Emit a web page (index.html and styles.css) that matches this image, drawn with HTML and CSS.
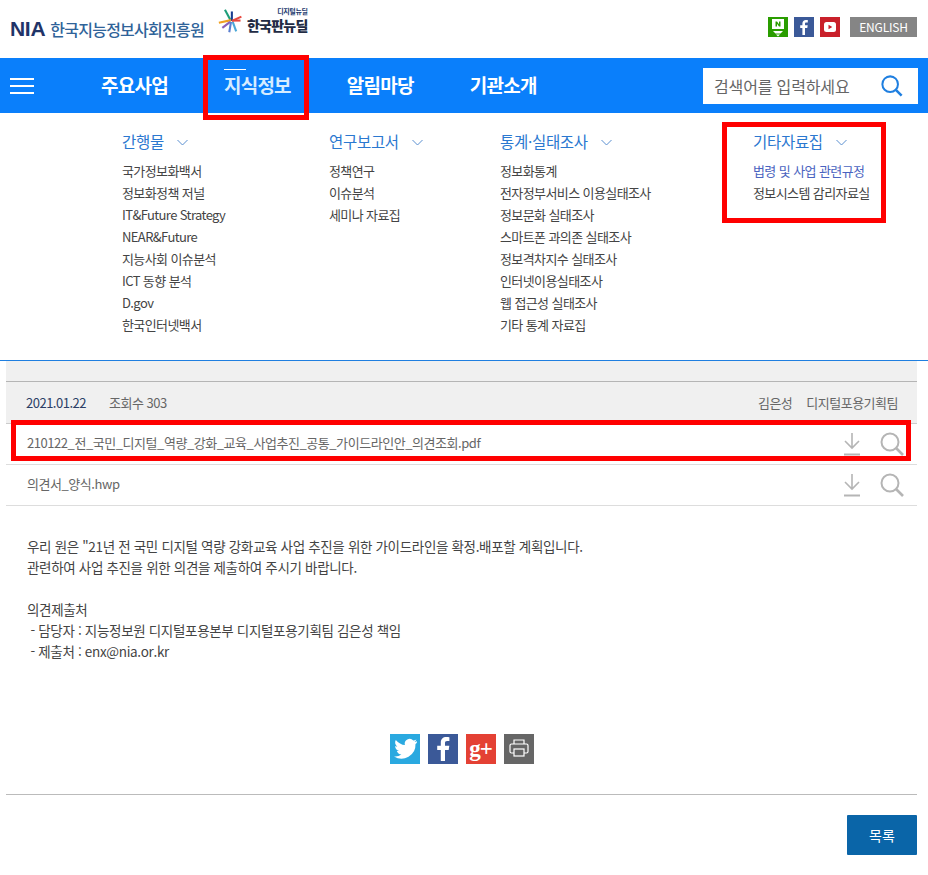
FILE: index.html
```html
<!DOCTYPE html>
<html lang="ko">
<head>
<meta charset="utf-8">
<title>NIA 한국지능정보사회진흥원</title>
<link rel="stylesheet" href="styles.css">
</head>
<body>
<div class="page">
  <header class="top">
    <div class="logos">
      <span class="nia">NIA</span>
      <span class="org">한국지능정보사회진흥원</span>
      <svg class="star" width="26" height="28" viewBox="0 0 30 32" fill="none" stroke-width="2.400">
        <path d="M15 16L8 3" stroke="#1f9e7a"/>
        <path d="M16 16V5" stroke="#1a3d8f"/>
        <path d="M16 16L27 11" stroke="#e8483f"/>
        <path d="M15 15L1 18" stroke="#f0a020"/>
        <path d="M14 17L5 24" stroke="#8a5fb8"/>
        <path d="M15 17L13 29" stroke="#5a7fd0"/>
        <path d="M17 17L21 28" stroke="#4aa8d8"/>
        <path d="M17 15.500H26" stroke="#e8483f"/>
      </svg>
      <span class="deal"><small>디지털뉴딜</small><b>한국판뉴딜</b></span>
    </div>
    <div class="top-right">
      <a class="sns naver"><svg width="20" height="20" viewBox="0 0 20 20"><path d="M4 2h12v10H4z" fill="#fff"/><path d="M7.500 4.500h1.500l2 2.800V4.500h1.500v5H11L9 6.700v2.800H7.500z" fill="#2a9d00"/><path d="M5 14h10l-2.500 2.500h-5zM8 17.500h4L10 19.500z" fill="#fff"/></svg></a>
      <a class="sns fb"><svg width="20" height="20" viewBox="0 0 20 20"><path d="M11 18v-7h2.300l.4-2.700H11V6.700c0-.8.3-1.300 1.400-1.300h1.400V3c-.3 0-1.100-.1-2-.1-2 0-3.400 1.200-3.400 3.500v1.900H6.200V11h2.200v7z" fill="#fff"/></svg></a>
      <a class="sns yt"><svg width="20" height="20" viewBox="0 0 20 20"><rect x="4" y="5" width="12" height="10" rx="2.500" fill="#fff"/><path d="M8.500 7.800v4.400l3.800-2.200z" fill="#c9202a"/></svg></a>
      <a class="eng">ENGLISH</a>
    </div>
  </header>

  <nav class="gnb">
    <span class="burger"><i></i><i></i><i></i></span>
    <ul class="gnb-menu">
      <li>주요사업</li>
      <li class="on">지식정보</li>
      <li>알림마당</li>
      <li>기관소개</li>
    </ul>
    <div class="search">
      <span>검색어를 입력하세요</span>
      <svg width="22" height="22" viewBox="0 0 24 24" fill="none" stroke="#1f7fe0" stroke-width="2.200"><circle cx="10" cy="10" r="8.500"/><path d="M16.500 16.500l6 6" stroke-width="2.800"/></svg>
    </div>
  </nav>

  <section class="mega">
    <div class="col c1">
      <h3>간행물<svg class="chev" width="11" height="7" viewBox="0 0 11 7"><path d="M.5 1l5 5 5-5" fill="none" stroke="#5a8fd0"/></svg></h3>
      <a>국가정보화백서</a><a>정보화정책 저널</a><a>IT&amp;Future Strategy</a><a>NEAR&amp;Future</a><a>지능사회 이슈분석</a><a>ICT 동향 분석</a><a>D.gov</a><a>한국인터넷백서</a>
    </div>
    <div class="col c2">
      <h3>연구보고서<svg class="chev" width="11" height="7" viewBox="0 0 11 7"><path d="M.5 1l5 5 5-5" fill="none" stroke="#5a8fd0"/></svg></h3>
      <a>정책연구</a><a>이슈분석</a><a>세미나 자료집</a>
    </div>
    <div class="col c3">
      <h3>통계·실태조사<svg class="chev" width="11" height="7" viewBox="0 0 11 7"><path d="M.5 1l5 5 5-5" fill="none" stroke="#5a8fd0"/></svg></h3>
      <a>정보화통계</a><a>전자정부서비스 이용실태조사</a><a>정보문화 실태조사</a><a>스마트폰 과의존 실태조사</a><a>정보격차지수 실태조사</a><a>인터넷이용실태조사</a><a>웹 접근성 실태조사</a><a>기타 통계 자료집</a>
    </div>
    <div class="col c4">
      <h3>기타자료집<svg class="chev" width="11" height="7" viewBox="0 0 11 7"><path d="M.5 1l5 5 5-5" fill="none" stroke="#5a8fd0"/></svg></h3>
      <a class="cur">법령 및 사업 관련규정</a><a>정보시스템 감리자료실</a>
    </div>
  </section>

  <main class="board">
    <div class="title-band"></div>
    <div class="meta">
      <div><span class="date">2021.01.22</span><span class="views">조회수 303</span></div>
      <div class="author"><span>김은성</span><span>디지털포용기획팀</span></div>
    </div>
    <div class="file">
      <span class="file-name">210122_전_국민_디지털_역량_강화_교육_사업추진_공통_가이드라인안_의견조회.pdf</span>
      <span class="file-icons">
        <svg width="18" height="24" viewBox="0 0 18 24" fill="none" stroke="#b5b5b5" stroke-width="1.600"><path d="M9 1v15M2 9l7 7 7-7"/><path d="M1 22.500h16" stroke-width="2"/></svg>
        <svg width="24" height="24" viewBox="0 0 24 24" fill="none" stroke="#b5b5b5" stroke-width="2"><circle cx="10" cy="10" r="8.500"/><path d="M16 16l7 7" stroke-width="2.600"/></svg>
      </span>
    </div>
    <div class="file">
      <span class="file-name">의견서_양식.hwp</span>
      <span class="file-icons">
        <svg width="18" height="24" viewBox="0 0 18 24" fill="none" stroke="#b5b5b5" stroke-width="1.600"><path d="M9 1v15M2 9l7 7 7-7"/><path d="M1 22.500h16" stroke-width="2"/></svg>
        <svg width="24" height="24" viewBox="0 0 24 24" fill="none" stroke="#b5b5b5" stroke-width="2"><circle cx="10" cy="10" r="8.500"/><path d="M16 16l7 7" stroke-width="2.600"/></svg>
      </span>
    </div>
    <div class="body">
      <p>우리 원은 "21년 전 국민 디지털 역량 강화교육 사업 추진을 위한 가이드라인을 확정.배포할 계획입니다.</p>
      <p>관련하여 사업 추진을 위한 의견을 제출하여 주시기 바랍니다.</p>
      <p>&nbsp;</p>
      <p>의견제출처</p>
      <p>&nbsp;- 담당자 : 지능정보원 디지털포용본부 디지털포용기획팀 김은성 책임</p>
      <p>&nbsp;- 제출처 : enx@nia.or.kr</p>
    </div>
    <div class="share">
      <a class="s tw"><svg width="30" height="30" viewBox="0 0 30 30"><path d="M27 7.300c-.9.400-1.800.7-2.800.8 1-.6 1.800-1.600 2.200-2.700-1 .6-2 1-3.100 1.200a4.900 4.900 0 0 0-8.400 4.500C11.800 10.900 8.200 9 5.800 6a4.900 4.900 0 0 0 1.500 6.600c-.8 0-1.600-.2-2.200-.6 0 2.400 1.700 4.400 3.900 4.900-.7.200-1.500.2-2.200.1.600 2 2.400 3.400 4.600 3.400A9.900 9.900 0 0 1 4 22.400 14 14 0 0 0 25.500 10c1-.7 1.800-1.600 1.500-2.700z" fill="#fff"/></svg></a>
      <a class="s fb2"><svg width="30" height="30" viewBox="0 0 30 30"><path d="M17 27V16h3.700l.6-4.300H17V9.200c0-1.300.4-2.100 2.200-2.100h2.200V3.300c-.4 0-1.700-.2-3.200-.2-3.200 0-5.400 2-5.400 5.500v3.100H9.200V16h3.600v11z" fill="#fff"/></svg></a>
      <a class="s gp"><span>g+</span></a>
      <a class="s pr"><svg width="30" height="30" viewBox="0 0 30 30" fill="none" stroke="#fff" stroke-width="1.200"><path d="M10 10V6h10v4"/><rect x="6" y="10" width="18" height="9" rx="1.500"/><rect x="10" y="15" width="10" height="7" fill="#666"/></svg></a>
    </div>
    <div class="actions"><a class="list-btn">목록</a></div>
  </main>

  <div class="mark m-nav"></div>
  <div class="mark m-sub"></div>
  <div class="mark m-file"></div>
</div>
</body>
</html>
```

FILE: styles.css
```css
* { box-sizing: border-box; }
html, body { margin: 0; padding: 0; }
body {
  background: #fff;
  color: #444;
  font-family: "Noto Sans CJK KR", "Noto Sans", sans-serif;
  font-size: 13px;
}
a { color: inherit; text-decoration: none; }
.page { position: relative; width: 928px; height: 875px; overflow: hidden; }

.top { height: 58px; display: flex; justify-content: space-between; align-items: center; padding: 0 11px 0 10px; }
.logos { display: flex; align-items: center; }
.nia { font: bold 21px "Liberation Sans", sans-serif; color: #1f3468; letter-spacing: -.3px; }
.org { margin-left: 5px; font-size: 16px; font-weight: 500; color: #2f6399; letter-spacing: -.75px; }
.star { margin-left: 14px; margin-top: -16px; }
.deal { display: flex; flex-direction: column; align-items: flex-end; margin-left: 3px; line-height: 1; margin-top: -18px; }
.deal small { font-size: 7px; font-weight: 700; color: #23396e; letter-spacing: -.35px; margin-bottom: 3px; }
.deal b { font-size: 14px; font-weight: 900; color: #222b44; letter-spacing: -.75px; }
.top-right { display: flex; align-items: center; margin-top: -4px; }
.sns { width: 20px; height: 20px; margin-right: 6px; display: block; }
.sns svg { display: block; }
.naver { background: #2a9d00; }
.fb { background: #3b5998; }
.yt { background: #c9202a; }
.eng { margin-left: 4px; width: 67px; height: 20px; background: #858585; color: #fff; font-size: 12px; line-height: 20px; text-align: center; letter-spacing: -.2px; }

.gnb { height: 55px; background: #0a7ffb; display: flex; align-items: center; position: relative; }
.burger { width: 24px; margin-left: 10px; display: flex; flex-direction: column; gap: 5px; }
.burger i { display: block; height: 2px; background: #fff; }
.gnb-menu { list-style: none; margin: 0 0 0 67px; padding: 0 0 2px; display: flex; gap: 56px; flex: 1; }
.gnb-menu li { position: relative; color: #fff; font-size: 19px; font-weight: 700; letter-spacing: -.75px; line-height: 28px; white-space: nowrap; }
.gnb-menu li.on { color: #d6ecff; }
.gnb-menu li.on::before { content: ""; position: absolute; left: 0; top: -2px; width: 22px; height: 1px; background: #fff; }
.search { width: 215px; height: 36px; margin-right: 10px; background: #fff; display: flex; align-items: center; justify-content: space-between; padding: 0 15px 0 11px; font-size: 16px; color: #666; letter-spacing: -.15px; }

.mega { height: 248px; border-bottom: 1px solid #1f7fe0; display: flex; padding: 16px 0 0 122px; }
.col { display: flex; flex-direction: column; }
.col h3 { margin: 0 0 7px; height: 24px; font-size: 15.500px; font-weight: 400; line-height: 24px; color: #2b78d0; letter-spacing: -.3px; white-space: nowrap; }
.chev { margin-left: 13px; vertical-align: 2px; }
.col a { display: block; font-size: 13px; line-height: 22px; color: #444; letter-spacing: -.6px; white-space: nowrap; }
.col a.cur { color: #4a63c0; }
.c1 { width: 207px; }
.c2 { width: 171px; }
.c3 { width: 253px; }

.board { margin: 0 11px 0 6px; }
.title-band { height: 21px; background: #f0f0f0; border-bottom: 1px solid #b5b5b5; }
.meta { height: 42px; background: #f0f0f0; border-bottom: 1px solid #ccc; display: flex; justify-content: space-between; align-items: center; padding: 0 19px 0 20px; font-size: 13px; letter-spacing: -.5px; }
.date { color: #2c3e66; }
.views { margin-left: 23px; color: #666; }
.author span { margin-left: 14px; color: #666; }
.file { height: 41px; border-bottom: 1px solid #ddd; display: flex; justify-content: space-between; align-items: center; padding: 0 13px 0 21px; font-size: 13px; color: #666; letter-spacing: -.45px; }
.file-name { margin-bottom: 4px; }
.file-icons { display: flex; align-items: center; gap: 19px; }
.file-icons svg { display: block; }
.body { padding: 30px 21px 0; font-size: 13.500px; line-height: 21px; color: #444; letter-spacing: -.33px; }
.body p { margin: 0; }
.share { margin-top: 72px; display: flex; justify-content: center; gap: 8px; height: 61px; border-bottom: 1px solid #bbb; }
.s { width: 30px; height: 30px; display: flex; align-items: center; justify-content: center; }
.s svg { display: block; }
.tw { background: #2aa9e0; }
.fb2 { background: #3b5998; }
.gp { background: #e44134; color: #fff; font: bold 23px "Liberation Serif", serif; line-height: 26px; letter-spacing: -1px; }
.pr { background: #666; }
.actions { display: flex; justify-content: flex-end; padding-top: 20px; }
.list-btn { width: 70px; height: 40px; background: #0a65a8; color: #fff; font-size: 14px; line-height: 40px; text-align: center; border-radius: 1px; }

.mark { position: absolute; border: 5px solid #f00; }
.m-nav { left: 203px; top: 55px; width: 106px; height: 65px; }
.m-sub { left: 722px; top: 122px; width: 164px; height: 101px; }
.m-file { left: 11px; top: 420px; width: 900px; height: 41px; }
```
